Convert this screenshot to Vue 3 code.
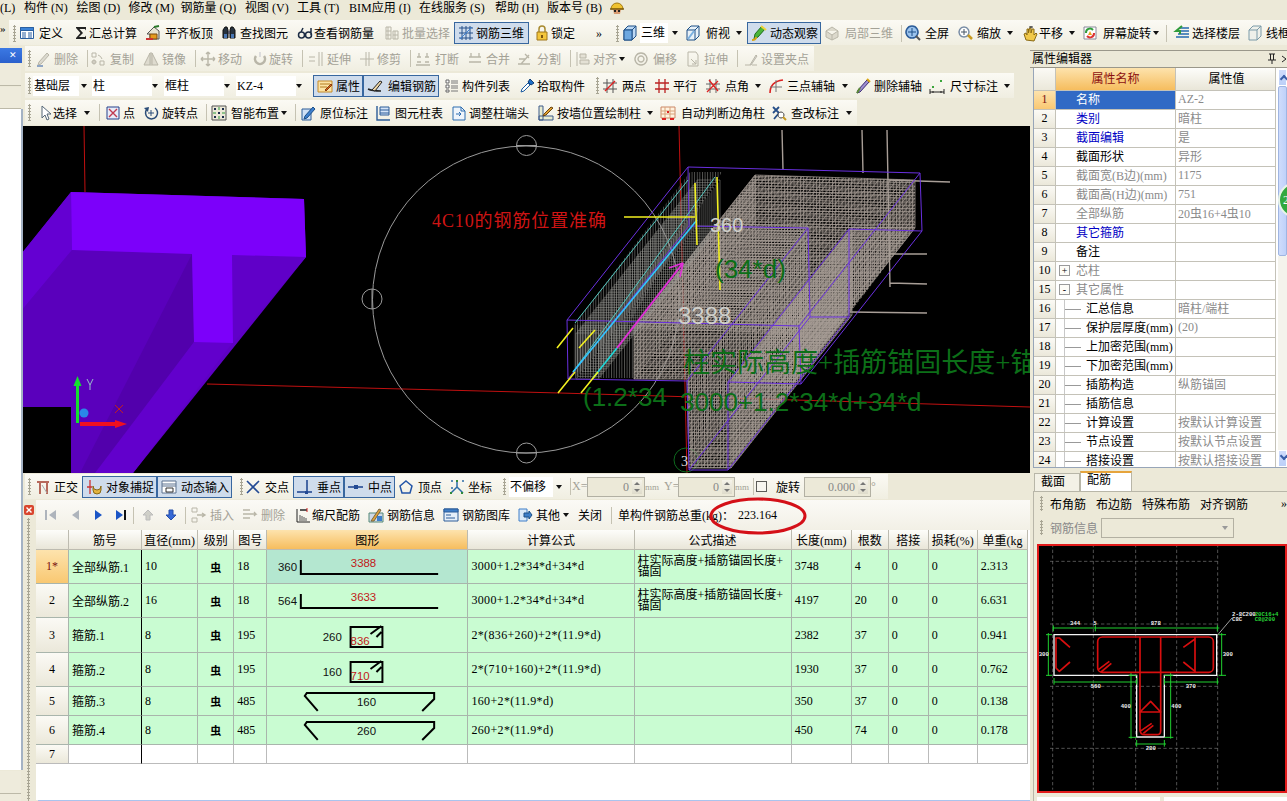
<script setup>
const P = (d, f = 'none', s = '#333', w = 1) => `<path d="${d}" fill="${f}" stroke="${s}" stroke-width="${w}"/>`
const G = '#b9b6a8'
const icons = {
  def: P('M1.5 2.5h13v11h-13z', '#fff', '#2a5fa0') + P('M1.5 2.5h13v3h-13z', '#3b82d6', '#2a5fa0') + P('M3 8h4M3 10h4M3 12h4M9 8h4M9 10h4M9 12h4', 'none', '#2a5fa0'),
  sigma: P('M3 2h10v3.5L12 4H6.5L10 8l-4 4h6l1-1.5V14H3v-1l4.4-5L3 3z', '#222', 'none'),
  align: P('M2 9l7-7 5 4v8H5V9z', '#e8e4d0', '#555') + P('M5 9h7v5H5z', '#e59a1c', '#7a4a10') + P('M1 13h7v2H1z', '#c33', 'none') + P('M9 2l5-1', 'none', '#2a7a2a', 2),
  binoc: P('M2 5l2-3h2l1 3v8H2zM9 5l1-3h2l2 3v8H9z', '#26323f', '#111') + P('M7 6h2v3H7z', '#556', 'none') + P('M3 9h3v4H3zM10 9h3v4h-3z', '#4a78b5', 'none'),
  glasses: P('M1.5 10a3 3 0 1 0 6 0a3 3 0 1 0-6 0M8.5 10a3 3 0 1 0 6 0a3 3 0 1 0-6 0M4 7l2-4M14 10V3', 'none', '#1c2c44', 1.5),
  batch: P('M2 2h5v12H2zM9 6h5v8H9zM2 6h5M2 10h5M9 10h5M4 2v12M11 6v8', 'none', G),
  cage: P('M1 3h14M1 8h14M1 13h14M4 1v14M8 1v14M12 1v14', 'none', '#27508a') + P('M2 14L14 2', 'none', '#3b7fd0'),
  lock: P('M5 7V4a3 3 0 0 1 6 0v3', 'none', '#a88a30', 1.5) + P('M3 7h10v8H3z', '#f3c63c', '#a0761a') + P('M7 10h2v3H7z', '#7a5510', 'none'),
  cube: P('M2 5l4-4h8v10l-4 4H2z', '#bcd8f4', '#1c4f86') + P('M2 5h8v10M10 5l4-4', 'none', '#1c4f86') + P('M2 5h8v10H2z', '#6da8e0', '#1c4f86'),
  cubew: P('M2 5l4-4h8v10l-4 4H2z', '#e8f1f8', '#1c4f86') + P('M2 5h8v10M10 5l4-4', 'none', '#1c4f86') + P('M3 14l6-8', 'none', '#7ab0e0', 2),
  orbit: P('M3 14l4-2 7-8-3-3-7 8z', '#4bb53a', '#1f6d1c') + P('M1 15c3 0 4-1 4-3', 'none', '#d8a514', 2) + P('M10 1l5 4', 'none', '#f2d33e', 2),
  part: P('M2 6l6-4 6 4-6 4zM2 6v6l6 3 6-3V6M8 10v5', '#dcd9cc', G),
  zoomf: P('M7 1a6 6 0 1 0 .01 0z', '#9cc4ee', '#2c5c98', 1.5) + P('M7 3v8M3 7h8', 'none', '#1c4f86') + P('M11 11l4 4', 'none', '#555', 2),
  zoom: P('M7 2a5 5 0 1 0 .01 0z', '#fff', '#7a8ea6', 1.5) + P('M11 10l4 4', 'none', '#c89a20', 2.5) + P('M7 4v6M4 7h6', 'none', '#456'),
  hand: P('M4 15l-2-6 2-1 1 2V4h1.5v4l1-5h1.5v5l1-4H12v6l2-2 1 1-3 7z', '#f1c94a', '#8a6a14') + P('M9 1v2M7 2l4 0', 'none', '#333'),
  spin: P('M2 2h12v12H2z', '#fff', '#889') + P('M4 8a4 4 0 0 1 7-3', 'none', '#2f9b3a', 2) + P('M12 8a4 4 0 0 1-7 3', 'none', '#d33', 2) + P('M8 6l-2 4h4z', '#e9a420', 'none'),
  floors: P('M6 3h9M6 6h9M4 9h11M2 12h13', 'none', '#236ab0', 1.5) + P('M8 1L2 6h4v3', 'none', '#2f9b3a', 2),
  wire: P('M2 5l4-4h8v10l-4 4H2zM2 5h8v10M10 5l4-4', '#eef0ea', '#7b9aa8'),
  del: P('M3 14l3-1 8-9-2-2-8 9z', '#dcdad0', G) + P('M2 15h6', 'none', '#8ea5c4', 2),
  copy: P('M2 2h4v4H2zM10 10h4v4h-4z', 'none', G) + P('M8 4a6 6 0 0 1 4 4', 'none', G) + P('M4 9a2 2 0 1 0 .01 0z', '#cfccc0', G),
  mirror: P('M7 2v12L1 14zM9 2v12l6 0z', '#dedbcf', G) + P('M8 1v14', 'none', G),
  move: P('M8 1v14M1 8h14M8 1L6 3M8 1l2 2M8 15l-2-2M8 15l2-2M1 8l2-2M1 8l2 2M15 8l-2-2M15 8l-2 2', 'none', G, 1.4),
  rot: P('M4 5a5 5 0 1 0 8 0', 'none', G, 2.5) + P('M8 1v5', 'none', '#ddd', 2),
  ext: P('M1 6h6M1 10h6M11 1v14M14 1v14', 'none', G),
  trim: P('M1 8h14M7 1v14M10 1v14', 'none', G),
  brk: P('M2 6h4M2 11h4M10 6h4M10 11h4M4 2v4M12 2v4M1 14h14', 'none', G, 1.3),
  merge: P('M2 6h12M2 11h12M4 2v4M12 2v4', 'none', G, 1.3),
  split: P('M2 13h12M5 13l8-9M3 8h6M9 3l4 4', 'none', G, 1.3),
  ali: P('M2 1v14M5 3h6v4H5zM5 9h9v4H5z', '#e4e1d5', G),
  off: P('M8 2a6 6 0 1 0 .01 0zM8 5a3 3 0 1 0 .01 0z', 'none', G, 1.4),
  strch: P('M3 1h8l2 3v11H3z', 'none', G) + P('M6 8l5 5M11 9v4H7', 'none', G),
  grp: P('M2 14h5M9 14h5M7 14l6-10 1 1-6 9z', '#ddd', G),
  attr: P('M1 3h14v11H1z', '#fbe3a4', '#c58a28') + P('M3 6h10M3 9h7', 'none', '#b27a20') + P('M8 12l6-6 1 1-6 6z', '#d9641a', '#8a3e10'),
  edit: P('M1 11c4 2 6 2 13 2', 'none', '#222', 1.5) + P('M5 12L13 3l2 1-7 9z', '#f1d9a8', '#222'),
  list: P('M2 2h3v3H2zM2 7h3v3H2zM2 12h3v2H2z', '#fff', '#666') + P('M7 3h7M7 5h7M7 8h7M7 10h7M7 13h7', 'none', '#777'),
  pick: P('M2 14l1-3 6-6 2 2-6 6z', '#fff', '#1d5ca0') + P('M9 4l2-3 4 4-3 2z', '#1e6fc8', '#123e75'),
  two: P('M1 5h14M1 11h14M5 1v14M11 1v14', 'none', '#555') + P('M3 13L13 3', 'none', '#d22', 1.5),
  para: P('M1 5h14M1 11h14M5 1v14M11 1v14', 'none', '#b22', 1.3),
  ang: P('M1 6h14M1 11h14M5 1v14M11 1v14', 'none', '#666') + P('M2 14L13 3M13 13L4 2', 'none', '#d22', 1.3),
  arc3: P('M2 15c0-8 5-12 13-13', 'none', '#d22', 1.6) + P('M8 2v12M2 9h12', 'none', '#777'),
  delax: P('M2 15l3-1 9-10-2-2-9 10z', '#9e8fd0', '#3c2c74') + P('M2 15l3-5', 'none', '#5b8a35', 2) + P('M12 1l3 3', 'none', '#d8a514', 2),
  dim: P('M1 14h14M1 11v5M15 11v5M5 14l-2 0M11 14l2 0', 'none', '#222') + P('M3 8h2v2H3zM11 2h2v2h-2z', '#3aa53a', 'none'),
  cur: P('M5 1v12l3-3 2 5 2-1-2-5h4z', '#fff', '#567'),
  boxx: P('M2 2h12v12H2z', '#e8ecf8', '#25418c') + P('M4 4l8 8M12 4l-8 8', 'none', '#c0394f', 1.4),
  rotp: P('M4 4a6 6 0 1 0 8-1', 'none', '#2a4c78', 1.5) + P('M1 3l5-1-1 5z', '#2a4c78', 'none') + P('M8 5v6M5 8h6', 'none', '#2a4c78'),
  smart: P('M1 1h14v14H1z', '#ece9d8', '#555') + P('M3 3h2v2H3zM11 3h2v2h-2zM3 11h2v2H3zM11 11h2v2h-2zM7 7h2v2H7z', '#1a2b4a', 'none') + P('M8 2v3M8 11v3M2 8h3M11 8h3', 'none', '#2f9b3a'),
  mark: P('M2 4h9v11H2z', '#cfe0f5', '#2c5c98') + P('M5 11l8-9 2 2-8 9-3 1z', '#3d7fce', '#1c4f86'),
  tcol: P('M2 1v14h13', 'none', '#2c5c98', 1.4) + P('M5 2h9v8H5z', '#d5e4f8', '#2c5c98') + P('M5 5h9M5 8h9', 'none', '#2c5c98'),
  adj: P('M2 2h8l4 4v9H2z', '#eef4fb', '#2c6cb0') + P('M10 2v4h4', 'none', '#2c6cb0') + P('M5 9h5M8 7l2 2-2 2', 'none', '#2c6cb0'),
  wall: P('M1 1h4v14H1zM1 11h14v4H1z', '#e8ecd0', '#3c5a8c') + P('M6 9l7-7 2 1-7 7-3 1z', '#e0a030', '#6a4510'),
  auto: P('M1 2h14v11H1z', '#fff3e0', '#c86') + P('M5 2v11M10 2v11M1 6h14M1 9h14', 'none', '#d7a27a') + P('M2 13h4v2H2zM10 13h4v2h-4zM7 6h2v2H7z', '#d22', 'none'),
  chk: P('M2 2l6 6M8 2L2 8M3 14l5-6', 'none', '#264e88', 1.8) + P('M10 7a3 3 0 1 0 .01 0z', '#fff', '#444') + P('M12 12l3 3', 'none', '#c89a20', 2),
  ortho: P('M2 3h12M5 3v12M12 3v12', 'none', '#b76a5c', 2) + P('M7 6l5 8', 'none', '#aaa', 1),
  snap: P('M4 1v14M1 8h5', 'none', '#c33', 1.3) + P('M7 7a4 4 0 1 0 8 0v4a4 4 0 0 1-8 0z', '#e2b440', '#8a6a14'),
  dyn: P('M1 2h14v12H1z', '#fff', '#5c7290') + P('M1 5h14M1 7h14', 'none', '#5c7290') + P('M5 9h7v4H5z', '#fff', '#333'),
  cross: P('M2 2l12 12M14 2L2 14', 'none', '#234a94', 1.6),
  perp: P('M0 13h15', 'none', '#234a94', 1.6) + P('M10 1v12', 'none', '#234a94', 1.6) + P('M8 12h3v3H8z', '#234a94', 'none'),
  mid: P('M0 8h15', 'none', '#234a94', 1.6) + P('M6 6h4v4H6z', '#234a94', 'none'),
  vtx: P('M8 2l6 5-2 7H4L2 7z', 'none', '#2356a8', 1.5),
  coord: P('M2 14l6-6M8 2v6l6 6M2 2l2 0M13 2l2 0M2 9h2', 'none', '#2c6ca8', 1.5) + P('M7 1h2v2H7zM12 13h2v2h-2zM1 13h2v2H1z', '#2f8a3a', 'none'),
  first: P('M3 3v10', 'none', '#aeb4bc', 2) + P('M13 3v10L6 8z', '#aeb4bc', 'none'),
  prev: P('M11 3v10L4 8z', '#aeb4bc', 'none'),
  next: P('M5 3v10l7-5z', '#1b55c6', 'none'),
  last: P('M3 3v10l7-5z', '#1b55c6', 'none') + P('M12 3v10', 'none', '#111', 2),
  up: P('M8 3l5 5h-3v5H6V8H3z', '#cfcfc8', '#bbb'),
  down: P('M8 13L3 8h3V3h4v5h3z', '#3669d6', '#274fa8'),
  ins: P('M2 1h5v4H2zM2 11h5v4H2z', 'none', G) + P('M7 8h8M12 6l3 2-3 2', 'none', G, 1.4),
  rem: P('M1 3h7M1 7h7M1 11h7M8 7h6l-2-2M14 7l-2 2', 'none', G, 1.3),
  scale: P('M2 2v13M2 15h13', 'none', '#222') + P('M5 14V8M7 14V9M9 14v-4M11 14v-3', 'none', '#555') + P('M5 3h7', 'none', '#222', 1.5) + P('M12 1v4', 'none', '#c22'),
  info: P('M1 6h14v9H1z', '#cfd9e6', '#587') + P('M3 14L11 2l2 1-7 11z', '#e1a338', '#764') + P('M9 9h5v5H9z', '#3f7fc9', 'none'),
  lib: P('M1 2h14v12H1z', '#e5effa', '#2c5c98') + P('M1 2h14v3H1z', '#3e7ec8', '#2c5c98') + P('M3 8h5M3 11h9', 'none', '#2c5c98'),
  other: P('M2 2h8v12H2z', '#dbe9f8', '#3e7ec8') + P('M7 6h5V4l3 4-3 4v-2H7z', '#3e7ec8', '#1c4f86'),
}

const b = (x, tx, t, icon, o = {}) => ({ k: 'b', x, tx, t, icon, ...o })
const g = x => ({ k: 'g', x })
const s = x => ({ k: 's', x })
const a = x => ({ k: 'a', x })
const sl = (x, w, t) => ({ k: 'sl', x, w, t })
const inp = (x, w, t) => ({ k: 'i', x, w, t })

function band(start, end, items) {
  const list = items.map((it, i) => {
    const nx = i + 1 < items.length ? items[i + 1].x : end
    const span = nx - it.x
    const w = it.w ?? span
    return { ...it, w, gap: span - w, slot: it.tx != null ? it.tx - it.x : 0 }
  })
  return { start, end, first: items[0].x - start, list }
}

const menu = [
  ['(L)', 24], ['构件', 52.5, '(N)'], ['绘图', 52, '(D)'], ['修改', 52, '(M)'], ['钢筋量', 64.5, '(Q)'],
  ['视图', 52, '(V)'], ['工具', 52, '(T)'], ['BIM应用', 70, '(I)'], ['在线服务', 76, '(S)'], ['帮助', 52, '(H)'], ['版本号', 62, '(B)'],
]

const top = band(9, 1287, [
  g(13), b(19, 39, '定义', 'def'), b(73, 89, '汇总计算', 'sigma'), b(145, 165, '平齐板顶', 'align'), b(221, 240, '查找图元', 'binoc'),
  b(297, 314, '查看钢筋量', 'glasses'), b(384, 402, '批量选择', 'batch', { dis: 1 }), b(454, 475, '钢筋三维', 'cage', { on: 1, w: 75 }),
  b(534, 551, '锁定', 'lock'), { k: 't', x: 596, t: '»' }, g(616), b(622, 622, '', 'cube', { w: 18 }), sl(640, 28, '三维'), a(672),
  b(685, 706, '俯视', 'cubew'), a(736), b(747, 769, '动态观察', 'orbit', { on: 1, w: 74 }), b(824, 845, '局部三维', 'part', { dis: 1 }), s(900),
  b(905, 925, '全屏', 'zoomf'), b(957, 977, '缩放', 'zoom'), a(1007), b(1022, 1039, '平移', 'hand'), a(1069), b(1082, 1103, '屏幕旋转', 'spin'), a(1153), s(1165),
  b(1174, 1192, '选择楼层', 'floors'), b(1247, 1266, '线框', 'wire'),
])

const rows = [
  band(25, 814, [
    g(28), b(35, 54, '删除', 'del', { dis: 1 }), s(86), b(90, 110, '复制', 'copy', { dis: 1 }), b(143, 162, '镜像', 'mirror', { dis: 1 }), s(194),
    b(200, 218, '移动', 'move', { dis: 1 }), b(252, 269, '旋转', 'rot', { dis: 1 }), s(301), b(308, 327, '延伸', 'ext', { dis: 1 }), b(359, 377, '修剪', 'trim', { dis: 1 }), s(409),
    b(415, 435, '打断', 'brk', { dis: 1 }), b(467, 486, '合并', 'merge', { dis: 1 }), b(516, 537, '分割', 'split', { dis: 1 }), s(569),
    b(575, 593, '对齐', 'ali', { dis: 1 }), a(619), b(633, 653, '偏移', 'off', { dis: 1 }), b(685, 704, '拉伸', 'strch', { dis: 1 }), s(736), b(743, 761, '设置夹点', 'grp', { dis: 1 }),
  ]),
  band(25, 1014, [
    g(28), sl(33, 46, '基础层'), a(81), sl(92, 60, '柱'), a(152), sl(164, 60, '框柱'), a(224), sl(236, 60, 'KZ-4'), a(296),
    b(313, 335, '属性', 'attr', { on: 1, w: 50 }), b(363, 387, '编辑钢筋', 'edit', { on: 1, w: 76 }), b(444, 462, '构件列表', 'list'), b(519, 537, '拾取构件', 'pick'),
    g(596), b(602, 622, '两点', 'two'), b(654, 673, '平行', 'para'), b(705, 725, '点角', 'ang'), a(755), b(768, 787, '三点辅轴', 'arc3'), a(842),
    b(855, 874, '删除辅轴', 'delax'), b(929, 950, '尺寸标注', 'dim'), a(1004),
  ]),
  band(25, 857, [
    g(28), b(37, 53, '选择', 'cur'), a(84), s(98), b(105, 123, '点', 'boxx'), b(143, 162, '旋转点', 'rotp'), s(205), b(211, 231, '智能布置', 'smart'), a(281), s(294),
    b(300, 320, '原位标注', 'mark'), b(375, 395, '图元柱表', 'tcol'), b(451, 469, '调整柱端头', 'adj'), b(538, 557, '按墙位置绘制柱', 'wall'), a(647),
    b(660, 681, '自动判断边角柱', 'auto'), b(771, 791, '查改标注', 'chk'), a(846),
  ]),
]

const snapRow = band(25, 888, [
  g(28), b(35, 54, '正交', 'ortho'), b(82, 105, '对象捕捉', 'snap', { on: 1, w: 75 }), b(157, 180, '动态输入', 'dyn', { on: 1, w: 75 }), g(240),
  b(245, 265, '交点', 'cross'), b(293, 316, '垂点', 'perp', { on: 1, w: 51 }), b(344, 367, '中点', 'mid', { on: 1, w: 51 }), b(398, 418, '顶点', 'vtx'), b(449, 468, '坐标', 'coord'),
  g(503), sl(509, 44, '不偏移'), a(556), s(569), { k: 't', x: 572, t: 'X=', dis: 1 }, inp(587, 58, '0'), { k: 't', x: 646, t: 'mm', dis: 1, tiny: 1 }, { k: 't', x: 665, t: 'Y=', dis: 1 },
  inp(679, 57, '0'), { k: 't', x: 737, t: 'mm', dis: 1, tiny: 1 }, s(754), { k: 'c', x: 758 }, { k: 't', x: 778, t: '旋转' }, inp(806, 67, '0.000'), { k: 't', x: 877, t: '°', dis: 1 },
])

const barRow = band(36, 1029, [
  b(43, 43, '', 'first', { w: 16 }), b(68, 68, '', 'prev', { w: 16 }), b(90, 90, '', 'next', { w: 16 }), b(113, 113, '', 'last', { w: 16 }), s(132),
  b(140, 140, '', 'up', { w: 16 }), b(163, 163, '', 'down', { w: 16 }), s(184), b(190, 210, '插入', 'ins', { dis: 1 }), b(242, 261, '删除', 'rem', { dis: 1 }),
  b(295, 312, '缩尺配筋', 'scale'), b(368, 387, '钢筋信息', 'info'), b(443, 462, '钢筋图库', 'lib'), b(517, 536, '其他', 'other'), a(563),
  { k: 't', x: 578, t: '关闭' }, s(610), { k: 't', x: 618, t: '单构件钢筋总重(kg)：' }, { k: 't', x: 738, t: '223.164' },
])

const colW = [33, 73, 56, 36, 33, 201, 166, 157, 60, 37, 40, 49, 50]
const heads = ['', '筋号', '直径(mm)', '级别', '图号', '图形', '计算公式', '公式描述', '长度(mm)', '根数', '搭接', '损耗(%)', '单重(kg']
const desc = '柱实际高度+插筋锚固长度+\n锚固'
const f1 = '3000+1.2*34*d+34*d'
const data = [
  { n: '1*', h: 34, sel: 1, name: '全部纵筋.1', d: '10', no: '18', shape: 'L', a: '360', b: '3388', f: f1, de: desc, len: '3748', cnt: '4', w: '2.313' },
  { n: '2', h: 34, name: '全部纵筋.2', d: '16', no: '18', shape: 'L', a: '564', b: '3633', f: f1, de: desc, len: '4197', cnt: '20', w: '6.631' },
  { n: '3', h: 35, name: '箍筋.1', d: '8', no: '195', shape: 'B', a: '260', b: '836', f: '2*(836+260)+2*(11.9*d)', de: '', len: '2382', cnt: '37', w: '0.941' },
  { n: '4', h: 34, name: '箍筋.2', d: '8', no: '195', shape: 'B', a: '160', b: '710', f: '2*(710+160)+2*(11.9*d)', de: '', len: '1930', cnt: '37', w: '0.762' },
  { n: '5', h: 29, name: '箍筋.3', d: '8', no: '485', shape: 'H', a: '160', f: '160+2*(11.9*d)', de: '', len: '350', cnt: '37', w: '0.138' },
  { n: '6', h: 29, name: '箍筋.4', d: '8', no: '485', shape: 'H', a: '260', f: '260+2*(11.9*d)', de: '', len: '450', cnt: '74', w: '0.178' },
]

const props = [
  ['1', '名称', 'AZ-2', 'sel'], ['2', '类别', '暗柱', 'blue'], ['3', '截面编辑', '是', 'blue'], ['4', '截面形状', '异形', ''],
  ['5', '截面宽(B边)(mm)', '1175', 'gray'], ['6', '截面高(H边)(mm)', '751', 'gray'], ['7', '全部纵筋', '20虫16+4虫10', 'gray'], ['8', '其它箍筋', '', 'blue'], ['9', '备注', '', ''],
  ['10', '芯柱', '', 'gray', '+'], ['15', '其它属性', '', 'gray', '-'],
  ['16', '汇总信息', '暗柱/端柱', 'sub'], ['17', '保护层厚度(mm)', '(20)', 'sub'], ['18', '上加密范围(mm)', '', 'sub'], ['19', '下加密范围(mm)', '', 'sub'],
  ['20', '插筋构造', '纵筋锚固', 'sub'], ['21', '插筋信息', '', 'sub'], ['22', '计算设置', '按默认计算设置', 'sub'], ['23', '节点设置', '按默认节点设置', 'sub'], ['24', '搭接设置', '按默认搭接设置', 'sub'],
]

const dx = -121, dy = 153
const shift = (pts, t) => pts.map(([x, y]) => [x + dx * t, y + dy * t])
const poly = pts => 'M' + pts.map(p => p[0].toFixed(1) + ' ' + p[1].toFixed(1)).join('L') + 'Z'
const cageT = [[755, 175], [915, 180], [915, 228], [852, 227], [852, 315], [810, 315], [808, 226], [755, 226]]
const flange = [[697, 180], [720, 180], [720, 226], [697, 226]]
let hatch = ''
for (let i = 0; i <= 60; i++) hatch += poly(shift(cageT, i / 60))
const seg = (pts, step) => {
  let out = ''
  pts.forEach((p, i) => {
    const q = pts[(i + 1) % pts.length]
    const n = Math.max(1, Math.round(Math.hypot(q[0] - p[0], q[1] - p[1]) / step))
    for (let j = 0; j < n; j++) {
      const x = p[0] + (q[0] - p[0]) * j / n, y = p[1] + (q[1] - p[1]) * j / n
      out += `M${x.toFixed(1)} ${y.toFixed(1)}l${dx} ${dy}`
    }
  })
  return out
}
hatch += seg(cageT, 6)
let teal = ''
for (let i = 0; i <= 60; i++) teal += poly(shift(flange, i / 60))
const farT = [[688, 167], [920, 173], [922, 231], [849, 229], [849, 317], [810, 317], [808, 228], [689, 226]]
const nearT = shift(farT, 1)
let purple = poly(farT) + poly(nearT)
farT.forEach((p, i) => { purple += `M${p[0]} ${p[1]}L${nearT[i][0]} ${nearT[i][1]}` })
</script>

<template>
  <div class="app">
    <div class="menubar">
      <span v-for="m in menu" :key="m[0]" class="menu" :style="{ width: m[1] + 'px' }">{{ m[0] }}<i v-if="m[2]">{{ m[2] }}</i></span>
      <svg class="helmet" viewBox="0 0 16 16">
        <path d="M2 9a6 6 0 0 1 12 0z" fill="#f0c22e" stroke="#a67c10" />
        <path d="M4 9h8l-1 5H5z" fill="#d89a70" />
        <path d="M5 10h2v2H5zM9 10h2v2H9z" fill="#222" />
        <path d="M1 9h14" stroke="#7a5a08" stroke-width="1.4" />
      </svg>
    </div>

    <div class="tbline">
      <span class="chev">»</span>
      <div class="band" :style="{ marginLeft: top.start + 'px', paddingLeft: top.first + 'px', width: top.end - top.start + 'px' }">
        <template v-for="(it, i) in top.list" :key="i">
          <span v-if="it.k === 'g'" class="grip" :style="{ width: it.w + 'px' }"></span>
          <span v-else-if="it.k === 's'" class="sep" :style="{ width: it.w + 'px' }"></span>
          <span v-else-if="it.k === 'a'" class="arr" :style="{ width: it.w + 'px' }"></span>
          <span v-else-if="it.k === 'sl'" class="sel" :style="{ width: it.w + 'px', marginRight: it.gap + 'px' }">{{ it.t }}</span>
          <span v-else-if="it.k === 't'" class="it" :class="{ dis: it.dis }" :style="{ width: it.w + 'px' }">{{ it.t }}</span>
          <span v-else class="it" :class="{ on: it.on, dis: it.dis }" :style="{ width: it.w + 'px', marginRight: it.gap + 'px' }">
            <span class="slot" :style="{ width: it.slot + 'px' }"><svg viewBox="0 0 16 16" class="ic" :class="{ pad: it.on }" v-html="icons[it.icon]"></svg></span>{{ it.t }}
          </span>
        </template>
      </div>
    </div>

    <div class="main">
      <div class="left">
        <div class="ltitle">✕</div>
        <div class="lbar"></div>
        <div class="lbar"></div>
        <div class="lwhite"></div>
        <div class="lbar low"></div>
        <div class="lbar low2"></div>
      </div>

      <div class="center">
        <div v-for="(r, ri) in rows" :key="ri" class="tbrow">
          <div class="band" :style="{ marginLeft: r.start - 23 + 'px', paddingLeft: r.first + 'px', width: r.end - r.start + 'px' }">
            <template v-for="(it, i) in r.list" :key="i">
              <span v-if="it.k === 'g'" class="grip" :style="{ width: it.w + 'px' }"></span>
              <span v-else-if="it.k === 's'" class="sep" :style="{ width: it.w + 'px' }"></span>
              <span v-else-if="it.k === 'a'" class="arr" :style="{ width: it.w + 'px' }"></span>
              <span v-else-if="it.k === 'sl'" class="sel" :style="{ width: it.w + 'px', marginRight: it.gap + 'px' }">{{ it.t }}</span>
              <span v-else class="it" :class="{ on: it.on, dis: it.dis }" :style="{ width: it.w + 'px', marginRight: it.gap + 'px' }">
                <span class="slot" :style="{ width: it.slot + 'px' }"><svg viewBox="0 0 16 16" class="ic" :class="{ pad: it.on }" v-html="icons[it.icon]"></svg></span>{{ it.t }}
              </span>
            </template>
          </div>
        </div>

        <svg class="canvas" viewBox="23 126 1007 347" width="1007" height="347">
          <defs>
            <pattern id="mesh" width="3.2" height="3.2" patternUnits="userSpaceOnUse">
              <path d="M0 .5H3.2M.5 0V3.2" stroke="#a89e97" stroke-width=".7" fill="none" />
            </pattern>
            <pattern id="vhatch" width="2.6" height="6" patternUnits="userSpaceOnUse">
              <path d="M.5 0V6" stroke="#8f8f8a" stroke-width=".6" fill="none" />
            </pattern>
          </defs>
          <rect x="23" y="126" width="1007" height="347" fill="#000" />
          <path d="M84 126l1 66M679 126l8 347" stroke="#c01010" fill="none" />
          <path d="M207 384L560 393L1030 407" stroke="#c01010" fill="none" />
          <!-- solid purple column -->
          <path d="M22 253L71 192L304 199L306 257L133 473H71V407H22z" fill="#5e00c4" />
          <path d="M22 253L71 192L72 250L22 310z" fill="#6400d2" />
          <path d="M22 310L72 250L192 254L194 342L90 473H71V407H22z" fill="#5a00bc" />
          <path d="M192 254L194 342L100 473H80z" fill="#5200ac" />
          <path d="M232 255L306 257L233 343z" fill="#6000c8" />
          <path d="M194 342H233L133 473H95z" fill="#6200cc" />
          <path d="M71 192L304 199L306 257L232 255L233 343L194 342L192 254L72 250z" fill="#7c00fa" />
          <!-- UCS -->
          <path d="M77.5 423V386" stroke="#14e030" stroke-width="3" />
          <path d="M73.5 386L77.5 376L81.5 386z" fill="#14e030" />
          <path d="M80 424H116" stroke="#f01020" stroke-width="4" />
          <path d="M115 420L127 424L115 428z" fill="#f01020" />
          <circle cx="84" cy="413" r="4.5" fill="#2a88e8" />
          <path d="M87 379l3 6 3-6M90 385v5" stroke="#9bc" fill="none" />
          <path d="M115 405l8 8M123 405l-8 8" stroke="#c02020" />
          <!-- axis circle -->
          <g stroke="#9a9a9a" fill="none">
            <circle cx="526" cy="299.5" r="153.5" />
            <circle cx="526.5" cy="145.5" r="10" /><path d="M516 145.5h21" />
            <circle cx="372" cy="299" r="10" /><path d="M372 289v20" />
            <circle cx="526.5" cy="453" r="10" /><path d="M516 453h21" />
          </g>
          <circle cx="686" cy="460" r="12" fill="none" stroke="#0e6a1e" />
          <text x="681" y="466" class="cad gw" font-size="14">3</text>
          <!-- cage -->
          <path d="M755 175L915 180V228L731 468H689L687 379H634V328z" fill="url(#mesh)" />
          <path d="M690 172L722 172L599 372H573V326z" fill="url(#vhatch)" />
          <path d="M575 325H640V378H575z" fill="url(#vhatch)" />
          <path :d="hatch" fill="none" stroke="#a89e97" stroke-width=".7" />
          <path :d="teal" fill="none" stroke="#9a9a94" stroke-width=".5" />
          <path d="M782 130l1 40M862 130l1 43M887 130l3 157M887 180l63 2M890 254h37M890 283l37 1M850 312l77 1" stroke="#a89e97" stroke-width="1.4" fill="none" />
          <path :d="purple" fill="none" stroke="#6a30e0" />
          <path d="M715 177L573 372M688 180L575 323" stroke="#54c8c0" fill="none" />
          <path d="M697 220L573 372" stroke="#30c8ff" stroke-width="1.6" />
          <path d="M617 348L593 378" stroke="#20d8d8" stroke-width="1.6" />
          <path d="M683 263L617 348" stroke="#e030d8" stroke-width="2" />
          <path d="M683 263l-14 5M683 263l-3 14" stroke="#e030d8" stroke-width="1.5" />
          <path d="M624 217H695M695 183l2 62M717 177l3 113M573 328L557 348M595 330L579 348M575 372L558 393M598 372L581 393" stroke="#f2f020" stroke-width="1.6" fill="none" />
          <!-- annotations -->
          <text x="432" y="227" class="cad red4" font-size="18">4C10的钢筋位置准确</text>
          <text x="683" y="372" class="cad gt" font-size="27">柱实际高度+插筋锚固长度+锚</text>
          <text x="583" y="406" class="cad gt sans" font-size="26">(1.2*34</text>
          <text x="680" y="411" class="cad gt sans" font-size="26">3000+1.2*34*d+34*d</text>
          <text x="715" y="278" class="cad gt sans" font-size="26">(34*d)</text>
          <text x="710" y="232" class="cad sans wt" font-size="20">360</text>
          <text x="678" y="324" class="cad sans wt" font-size="24">3388</text>
        </svg>

        <div class="tbrow">
          <div class="band" :style="{ marginLeft: snapRow.start - 23 + 'px', paddingLeft: snapRow.first + 'px', width: snapRow.end - snapRow.start + 'px' }">
            <template v-for="(it, i) in snapRow.list" :key="i">
              <span v-if="it.k === 'g'" class="grip" :style="{ width: it.w + 'px' }"></span>
              <span v-else-if="it.k === 's'" class="sep" :style="{ width: it.w + 'px' }"></span>
              <span v-else-if="it.k === 'a'" class="arr" :style="{ width: it.w + 'px' }"></span>
              <span v-else-if="it.k === 'sl'" class="sel" :style="{ width: it.w + 'px', marginRight: it.gap + 'px' }">{{ it.t }}</span>
              <span v-else-if="it.k === 't'" class="it" :class="{ dis: it.dis, tiny: it.tiny }" :style="{ width: it.w + 'px' }">{{ it.t }}</span>
              <span v-else-if="it.k === 'i'" class="num" :style="{ width: it.w + 'px' }">{{ it.t }}<span class="spin"></span></span>
              <span v-else-if="it.k === 'c'" class="chkwrap" :style="{ width: it.w + 'px' }"><span class="chkbox"></span></span>
              <span v-else class="it" :class="{ on: it.on, dis: it.dis }" :style="{ width: it.w + 'px', marginRight: it.gap + 'px' }">
                <span class="slot" :style="{ width: it.slot + 'px' }"><svg viewBox="0 0 16 16" class="ic" :class="{ pad: it.on }" v-html="icons[it.icon]"></svg></span>{{ it.t }}
              </span>
            </template>
          </div>
        </div>

        <div class="lower">
          <div class="gripcol">
            <svg class="closer" viewBox="0 0 10 10"><rect width="10" height="10" rx="2" fill="#d9452e" /><path d="M2.5 2.5l5 5M7.5 2.5l-5 5" stroke="#fff" stroke-width="1.4" /></svg>
            <span class="dots"></span>
          </div>
          <div class="lowermain">
            <div class="barrow" :style="{ paddingLeft: barRow.list[0].x - 36 + 'px' }">
              <template v-for="(it, i) in barRow.list" :key="i">
                <span v-if="it.k === 's'" class="sep" :style="{ width: it.w + 'px' }"></span>
                <span v-else-if="it.k === 'a'" class="arr" :style="{ width: it.w + 'px' }"></span>
                <span v-else-if="it.k === 't'" class="it" :style="{ width: it.w + 'px' }">{{ it.t }}</span>
                <span v-else class="it" :class="{ dis: it.dis }" :style="{ width: it.w + 'px', marginRight: it.gap + 'px' }">
                  <span class="slot" :style="{ width: it.slot + 'px' }"><svg viewBox="0 0 16 16" class="ic" v-html="icons[it.icon]"></svg></span>{{ it.t }}
                </span>
              </template>
            </div>
            <div class="gridwrap">
              <table class="grid">
                <colgroup><col v-for="(w, i) in colW" :key="i" :style="{ width: w + 'px' }" /></colgroup>
                <thead>
                  <tr><th v-for="(h, i) in heads" :key="i" :class="{ hot: i === 5 }">{{ h }}</th></tr>
                </thead>
                <tbody>
                  <tr v-for="r in data" :key="r.n" :style="{ height: r.h + 'px' }">
                    <td class="rh" :class="{ hot: r.sel }">{{ r.n }}</td>
                    <td class="bl">{{ r.name }}</td>
                    <td>{{ r.d }}</td>
                    <td class="ctr grade">虫</td>
                    <td>{{ r.no }}</td>
                    <td class="shape" :class="{ picked: r.sel }">
                      <svg :viewBox="`0 0 201 ${r.h - 1}`" width="200" :height="r.h - 1">
                        <template v-if="r.shape === 'L'">
                          <text x="11" y="21" class="st">{{ r.a }}</text>
                          <path d="M34 10V24H172" fill="none" stroke="#000" stroke-width="2" />
                          <text x="97" y="17" class="st red" text-anchor="middle">{{ r.b }}</text>
                        </template>
                        <template v-else-if="r.shape === 'B'">
                          <text x="56" y="23" class="st">{{ r.a }}</text>
                          <path d="M84 9H116V29H84zM104 16L115 8M110 19L115 14" fill="none" stroke="#000" stroke-width="2" />
                          <text x="84" y="27" class="st red">{{ r.b }}</text>
                        </template>
                        <template v-else>
                          <path d="M51 24L38 9L40 6H168V12L156 24" fill="none" stroke="#000" stroke-width="2" />
                          <text x="100" y="19" class="st" text-anchor="middle">{{ r.a }}</text>
                        </template>
                      </svg>
                    </td>
                    <td class="sp">{{ r.f }}</td>
                    <td class="desc">{{ r.de }}</td>
                    <td>{{ r.len }}</td>
                    <td>{{ r.cnt }}</td>
                    <td>0</td>
                    <td>0</td>
                    <td>{{ r.w }}</td>
                  </tr>
                  <tr class="empty"><td class="rh">7</td><td class="bl"></td><td v-for="n in 11" :key="n"></td></tr>
                </tbody>
              </table>
            </div>
            <div class="hscroll"></div>
            <svg class="ring" viewBox="0 0 102 42"><ellipse cx="51" cy="21" rx="47" ry="17" fill="none" stroke="#d41018" stroke-width="3" /></svg>
          </div>
        </div>
      </div>

      <div class="right">
        <div class="ptitle"><span>属性编辑器</span><svg class="pin" viewBox="0 0 20 12"><path d="M2 1h6M3.5 1v6M6.5 1v6M1 7h8M5 7v4" stroke="#222" fill="none" /><path d="M15 3l4 3-4 3" stroke="#222" fill="none" /></svg></div>
        <div class="pbox">
          <div class="pgrid">
            <div class="prow phead"><span class="pc pn"></span><span class="pc hot pname">属性名称</span><span class="pc pval cen">属性值</span></div>
            <div v-for="p in props" :key="p[0]" class="prow">
              <span class="pc pn" :class="{ hot: p[3] === 'sel' }">{{ p[0] }}</span>
              <span class="pc pname" :class="[p[3]]">
                <i v-if="p[4]" class="exp">{{ p[4] }}</i>
                <i v-if="p[3] === 'sub'" class="tree"></i>{{ p[1] }}
              </span>
              <span class="pc pval">{{ p[2] }}</span>
            </div>
          </div>
          <div class="vbar">
            <span class="vb"></span><span class="vthumb"></span><span class="vtrack"></span><span class="vb dn"></span>
          </div>
          <span class="badge">2</span>
        </div>
        <div class="tabs"><span class="tab">截面</span><span class="tab act">配筋</span></div>
        <div class="ppanel">
          <div class="ptools"><span class="grip small"></span><span v-for="t in ['布角筋', '布边筋', '特殊布筋', '对齐钢筋']" :key="t">{{ t }}</span><em>»</em></div>
          <div class="ptools two"><span class="grip small"></span><span class="gray">钢筋信息</span><span class="combo"></span></div>
          <svg class="section" viewBox="21 18 750 747" width="250" height="249">
            <rect x="21" y="18" width="750" height="747" fill="#000" />
            <g stroke="#7a7a7a" stroke-width="2" stroke-dasharray="10 7" fill="none">
              <path d="M68 18V755M190 18V755M317 18V755M440 18V755M563 18V755" />
              <path d="M60 70H570M60 258H570M60 445H570M60 631H570" />
            </g>
            <path d="M72 290H560V412H403V597H320V412H72z" fill="none" stroke="#f4f4f4" stroke-width="4" />
            <g stroke="#20d030" stroke-width="3" fill="none">
              <path d="M66 270H568M55 285V414M48 290H66M48 412H66M70 262V280M196 262V280M562 262V280" />
              <path d="M575 285V414M566 290H588M566 412H588" />
              <path d="M72 432H322M403 432H566M72 420V440M320 420V440M403 420V440M562 420V440" />
              <path d="M303 405V602M296 598H320M296 412H320M422 405V602M403 598H430M403 412H430" />
              <path d="M316 618H408M320 606V626M403 606V626" />
            </g>
            <g stroke="#d80f0f" stroke-width="5" fill="none" stroke-linejoin="round">
              <rect x="203" y="297" width="347" height="106" rx="14" />
              <path d="M120 328L88 300H78V390L88 400L120 372" />
              <path d="M330 297V405M392 297V405M495 297V403M495 303L460 328M495 400L460 372" />
              <path d="M330 405V575Q330 590 345 590H380Q392 590 392 578V405" />
              <path d="M330 522L362 490L392 522z" />
              <path d="M205 395L238 370M213 402L244 376M330 580L365 556M340 586L370 562" />
            </g>
            <path d="M562 292L606 240" stroke="#eee" stroke-width="2" />
            <g class="sectxt">
              <text x="120" y="262">344</text><text x="190" y="262">5</text><text x="362" y="262">878</text>
              <text x="26" y="355">300</text><text x="578" y="355">300</text>
              <text x="182" y="450">560</text><text x="467" y="450">370</text>
              <text x="272" y="511">400</text><text x="424" y="511">400</text><text x="347" y="636">280</text>
              <text x="606" y="233">2-8C200</text><text x="606" y="248">C8C</text>
            </g>
            <g class="sectxt gr"><text x="674" y="233">20C16+4</text><text x="674" y="248">C8@200</text></g>
          </svg>
          <div class="pfoot"><span></span><span></span></div>
        </div>
      </div>
    </div>
  </div>
</template>

<style scoped>
.app { width: 1287px; height: 801px; overflow: hidden; background: #ece9d8; font: 12px "Liberation Serif", "Noto Sans CJK SC", serif; color: #000; display: flex; flex-direction: column; position: relative; }
.menubar { height: 20px; flex: none; display: flex; align-items: flex-start; background: #ece9d8; line-height: 16px; white-space: nowrap; }
.menu { flex: none; }
.menu i { font-style: normal; margin-left: 3px; }
.helmet { width: 16px; height: 16px; margin-left: 0; flex: none; }
.tbline { height: 25px; flex: none; display: flex; align-items: center; position: relative; }
.chev { position: absolute; left: 0; top: 2px; font-size: 11px; width: 6px; overflow: hidden; }
.band { height: 25px; flex: none; display: flex; align-items: center; background: linear-gradient(#fbfaf4, #f0eee1); white-space: nowrap; box-sizing: border-box; }
.tbline .band { padding-top: 1px; }
.tbrow { height: 27px; flex: none; display: flex; align-items: center; }
.grip { flex: none; height: 17px; background: radial-gradient(circle, #a8a594 1px, transparent 1.2px) 0 0 / 3px 3px repeat-y; }
.grip.small { width: 6px; height: 15px; display: inline-block; }
.sep { flex: none; height: 17px; position: relative; }
.sep::before { content: ""; position: absolute; left: 1px; top: 0; bottom: 0; width: 1px; background: #c5c2b2; }
.arr { flex: none; height: 10px; position: relative; }
.arr::after { content: ""; position: absolute; left: 0; top: 3px; border: 3px solid transparent; border-top: 4px solid #111; }
.it { flex: none; display: flex; align-items: center; height: 22px; box-sizing: border-box; overflow: visible; }
.it.dis { color: #a4a297; }
.it.tiny { font-size: 9px; }
.it.on { border: 1px solid #38679f; background: #cfdcec; margin-top: 0; }
.slot { flex: none; height: 16px; display: block; }
.ic { width: 16px; height: 16px; display: block; overflow: visible; }
.ic.pad { margin-left: 3px; }
.sel { flex: none; height: 20px; line-height: 20px; background: #fff; padding-left: 1px; box-sizing: border-box; }
.num { flex: none; height: 20px; line-height: 18px; border: 1px solid #b2b0a3; background: #ece9d8; box-sizing: border-box; text-align: right; padding-right: 15px; color: #888; position: relative; }
.spin { position: absolute; right: 2px; top: 2px; bottom: 2px; width: 10px; background: linear-gradient(#f5f3ea, #dedbcb); }
.spin::before, .spin::after { content: ""; position: absolute; left: 2px; border: 3px solid transparent; }
.spin::before { top: -1px; border-bottom: 3px solid #777; }
.spin::after { bottom: -1px; border-top: 3px solid #777; }
.chkwrap { flex: none; display: flex; align-items: center; }
.chkbox { width: 11px; height: 11px; border: 1px solid #5c5c58; background: #f7f6ef; display: block; box-sizing: border-box; }
.main { height: 756px; flex: none; display: flex; }
.left { width: 23px; flex: none; display: flex; flex-direction: column; padding-top: 3px; box-sizing: border-box; }
.ltitle { height: 15px; flex: none; background: linear-gradient(#3b79e4, #2b60cc); color: #fff; font-size: 9px; line-height: 15px; text-align: right; padding-right: 5px; margin-right: 1px; }
.lbar { height: 21px; flex: none; background: #eeebdc; border-bottom: 1px solid #bcb9a8; margin-right: 2px; margin-top: 1px; }
.lwhite { flex: 1; background: #fff; border-right: 2px solid #a4b2c4; }
.lbar.low { height: 22px; margin-top: 1px; }
.lbar.low2 { height: 7px; margin-top: 0; border-bottom: 0; }
.center { width: 1007px; flex: none; display: flex; flex-direction: column; }
.canvas { display: block; flex: none; width: 1007px; height: 347px; }
.cad { font-family: "Liberation Serif", "Noto Sans CJK SC", serif; }
.cad.sans { font-family: "Liberation Sans", sans-serif; }
.red4 { fill: #cf1414; letter-spacing: .9px; }
.gt { fill: #0c6f18; }
.gw { fill: #ddd; }
.wt { fill: #cfcfca; }
.lower { flex: 1; display: flex; min-height: 0; }
.gripcol { width: 13px; flex: none; position: relative; }
.closer { position: absolute; left: 1px; top: 5px; width: 10px; height: 10px; }
.dots { position: absolute; left: 4px; top: 18px; bottom: 0; width: 3px; background: radial-gradient(circle, #a8a594 1px, transparent 1.2px) 0 0 / 3px 3px repeat-y; }
.lowermain { flex: 1; display: flex; flex-direction: column; position: relative; min-width: 0; }
.barrow { height: 30px; flex: none; display: flex; align-items: center; background: linear-gradient(#fbfaf6, #f2f0e6); white-space: nowrap; box-sizing: border-box; }
.gridwrap { flex: 1; background: #fff; overflow: hidden; min-height: 0; }
.grid { width: 992px; table-layout: fixed; border-collapse: separate; border-spacing: 0; }
.grid th { height: 19px; padding: 1px 0 0; font-weight: 400; background: linear-gradient(#fdfdfa, #e9e6d8); border-right: 1px solid #bdbbb0; border-bottom: 1px solid #bdbbb0; white-space: nowrap; overflow: hidden; box-sizing: border-box; }
.grid th.hot { background: linear-gradient(#fde3ad, #f6bd5e); }
.grid td { padding: 0 0 0 3px; background: #c9fcd2; border-right: 1px solid #a9b5ac; border-bottom: 1px solid #a9b5ac; white-space: nowrap; overflow: hidden; box-sizing: border-box; }
.grid td.rh { background: linear-gradient(#fbfaf5, #ebe8da); text-align: center; padding: 0; }
.grid td.rh.hot { background: linear-gradient(#fde3ad, #f9c872); color: #7a1010; }
.grid td.bl { border-right: 1px solid #000; }
.grid td.ctr { text-align: center; padding: 0; }
.grade { font-weight: 700; font-size: 11px; }
.grid td.shape { padding: 0; }
.grid td.shape svg { display: block; }
.grid td.picked { background: #b4e7d0; }
.grid td.sp { letter-spacing: .35px; }
.grid td.desc { white-space: pre-line; line-height: 11px; }
.st { font: 11.5px "Liberation Sans", sans-serif; fill: #111; }
.st.red { fill: #c21818; }
.grid tr.empty { height: 19px; }
.grid tr.empty td { background: #fff; border-color: #bbb; }
.grid tr.empty td.rh { background: linear-gradient(#fbfaf5, #ebe8da); }
.grid tr.empty td.bl { border-right-color: #000; }
.hscroll { height: 1px; flex: none; background: #a9c4ee; margin-left: 2px; }
.ring { position: absolute; left: 671px; top: -5px; width: 102px; height: 42px; overflow: visible; }
.right { width: 257px; flex: none; display: flex; flex-direction: column; padding-top: 5px; box-sizing: border-box; }
.ptitle { height: 16px; flex: none; display: flex; justify-content: space-between; align-items: center; padding: 0 0 0 2px; border: 1px solid #9a978a; border-width: 1px 0; font-size: 12px; line-height: 14px; }
.pin { width: 20px; height: 12px; flex: none; }
.pbox { height: 400px; flex: none; display: flex; margin: 0 0 0 3px; border: 1px solid #97a5b8; border-top: 0; border-right: 0; background: #fff; position: relative; box-sizing: border-box; overflow: hidden; }
.pgrid { width: 242px; flex: none; overflow: hidden; }
.prow { display: flex; height: 19px; box-sizing: border-box; }
.phead { height: 23px; }
.pc { flex: none; box-sizing: border-box; border-right: 1px solid #c4c2b8; border-bottom: 1px solid #c4c2b8; display: flex; align-items: center; white-space: nowrap; overflow: hidden; padding-bottom: 2px; }
.pn { width: 22px; justify-content: center; background: linear-gradient(#fbfaf5, #ebe8da); }
.pn.hot { background: linear-gradient(#fde3ad, #f9c872); color: #7a1010; }
.pname { width: 120px; padding-left: 20px; }
.pval { width: 100px; padding-left: 2px; color: #8a8a8a; }
.pval.cen { justify-content: center; background: linear-gradient(#fdfdfa, #e9e6d8); color: #000; }
.phead .hot { background: linear-gradient(#fde3ad, #f6bd5e); color: #8c1010; justify-content: center; padding-left: 0; }
.pname.sel { background: #316ac5; color: #fff; height: 19px; line-height: normal; padding-left: 20px; }
.blue { color: #0000c4; }
.gray { color: #8a8a8a; }
.sub { padding-left: 30px; position: relative; }
.exp { position: absolute; margin-left: -17px; width: 11px; height: 11px; border: 1px solid #9a9a9a; background: #fdfcf7; font-style: normal; line-height: 10px; text-align: center; color: #000; box-sizing: border-box; font-size: 10px; }
.tree { position: absolute; left: 8px; top: 9px; width: 17px; height: 1px; background: #999; }
.tree::before { content: ""; position: absolute; left: 0; top: -10px; width: 1px; height: 20px; background: #c8c8c8; }
.vbar { flex: 1; display: flex; flex-direction: column; margin-left: 2px; padding-top: 1px; }
.vb { height: 17px; flex: none; background: linear-gradient(#cfdcfb, #bcd0f8); border: 1px solid #fff; position: relative; box-sizing: border-box; }
.vb::after { content: ""; position: absolute; left: 2px; top: 6px; width: 4px; height: 4px; border: solid #3a5fa8; border-width: 2px 0 0 2px; transform: rotate(45deg); }
.vb.dn::after { transform: rotate(225deg); top: 2px; }
.vthumb { height: 170px; flex: none; background: linear-gradient(90deg, #cfdcfb, #bfd1fa); border: 1px solid #9fb5e2; border-radius: 2px; box-sizing: border-box; }
.vtrack { flex: 1; background: #f4f3ec; }
.badge { position: absolute; left: 244px; top: 114px; width: 36px; height: 36px; border-radius: 50%; background: #33a83e; border: 2px solid #e8f4e8; color: #fff; line-height: 32px; padding-left: 3px; font-size: 12px; box-sizing: border-box; }
.tabs { height: 23px; flex: none; display: flex; align-items: flex-end; padding-left: 4px; }
.tab { width: 46px; height: 18px; line-height: 16px; padding-left: 6px; background: #f3f1e6; border: 1px solid #b8b6a8; border-bottom: 0; box-sizing: border-box; }
.tab.act { width: 52px; height: 21px; background: #fff; border-top: 2px solid #e6a43c; line-height: 14px; position: relative; top: 1px; }
.ppanel { flex: 1; border-top: 1px solid #b8b6a8; margin-left: 3px; border-left: 1px solid #b8b6a8; display: flex; flex-direction: column; min-height: 0; padding-left: 3px; position: relative; }
.ptools { height: 23px; flex: none; display: flex; align-items: center; gap: 10px; white-space: nowrap; position: relative; padding-left: 5px; margin-left: -2px; }
.ptools .grip { margin-right: -6px; }
.ptools em { position: absolute; right: 0; font-style: normal; }
.ptools.two { height: 25px; gap: 3px; margin-bottom: 4px; }
.ptools.two .grip { margin-right: 1px; }
.combo { width: 133px; height: 20px; border: 1px solid #b3b0a2; background: #ece9d8; box-sizing: border-box; display: block; position: relative; }
.combo::after { content: ""; position: absolute; right: 5px; top: 7px; border: 3px solid transparent; border-top: 4px solid #999; }
.section { display: block; flex: none; width: 250px; height: 249px; outline: 2px solid #e21b1b; outline-offset: -2px; }
.sectxt text { font: 700 17px "Liberation Mono", monospace; fill: #eee; }
.sectxt.gr text { fill: #28d838; }
.pfoot { flex: 1; display: flex; gap: 4px; align-items: flex-end; }
.pfoot span { flex: 1; height: 4px; background: #fff; }
</style>

<style>
body { background: #ece9d8; }
</style>
